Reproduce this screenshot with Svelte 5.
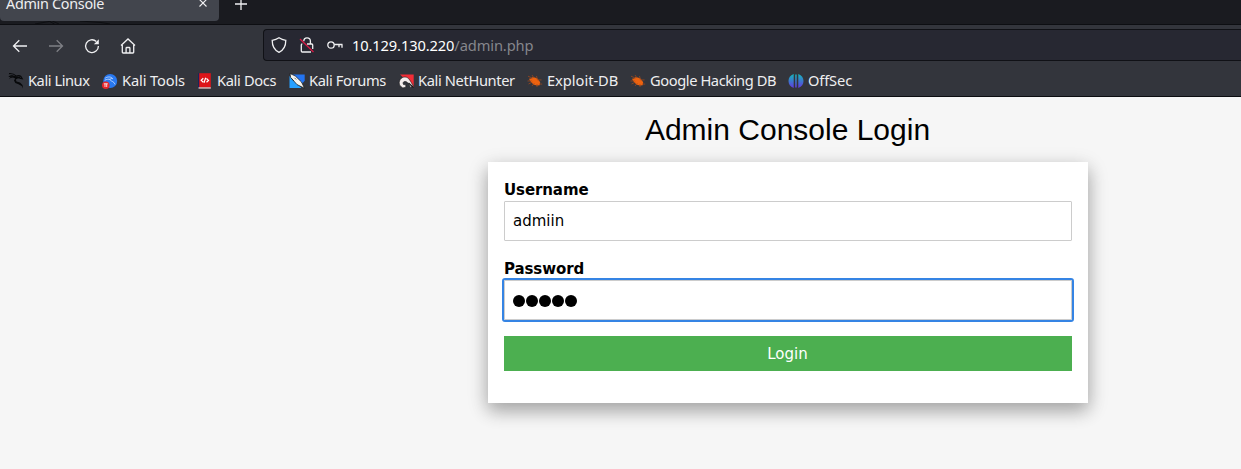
<script>
  const bookmarks = [
    { name: 'Kali Linux', icon: 'dragon', width: 94, tracking: -0.45 },
    { name: 'Kali Tools', icon: 'tools', width: 95, tracking: -0.14 },
    { name: 'Kali Docs', icon: 'docs', width: 92, tracking: -0.34 },
    { name: 'Kali Forums', icon: 'forums', width: 109, tracking: -0.36 },
    { name: 'Kali NetHunter', icon: 'hunter', width: 129, tracking: -0.37 },
    { name: 'Exploit-DB', icon: 'bug', width: 103, tracking: -0.03 },
    { name: 'Google Hacking DB', icon: 'bug', width: 158, tracking: -0.41 },
    { name: 'OffSec', icon: 'offsec', width: 80, tracking: -0.14 }
  ];
  let username = $state('admiin');
</script>

{#snippet dragon(color)}
  <path d="M0.2 1.5 5 2.5 8 3.2 11.3 5.5 9.5 5.5 7.8 6.5 8.5 8.5 12 9.5 14.5 12 15 15.5 13.7 13 10.5 11.2 7.3 10 6 7.4 7.2 5.4 5 4.5 2.5 5.1 0.8 6.2 2.5 4.1 5 3.5Z" fill={color}/>
  <path d="M1 .5C4 .3 6.5 1.2 8 2.8M.8 3.5l4-.4M8 3.2c2-.8 4-.5 5 .3l1.3 2.2-3-.6M9 4.4l2.6-.2.8 1.6" fill="none" stroke={color} stroke-width="1.1"/>
{/snippet}

{#snippet favicon(kind)}
  <svg class="favicon" viewBox="0 0 16 16">
    {#if kind === 'dragon'}
      {@render dragon('#08090b')}
    {:else if kind === 'tools'}
      <circle cx="8.2" cy="8" r="7" fill="#2878f0"/>
      <path d="M3.2 5.2c3-2 6.3-1.4 7.5.5-2-.7-2.9.3-2.3 1.5.6 1.2 3.2.7 4.6 4.2M2.7 7.3c2.1-1.1 3.8-1.3 5.4-.9" stroke="#b9d5ff" stroke-width="1" fill="none"/>
      <circle cx="3.8" cy="12.2" r="3.8" fill="#e5262b"/>
      <path d="M1.8 10.8h4M3 10.8V14m1.7-3.2V14" stroke="#fff" stroke-width=".8" fill="none"/>
    {:else if kind === 'docs'}
      <path d="M1 .2h2v15H1z" fill="#1b235c"/>
      <path d="M2.2.2h11.6v15H2.2z" fill="#dc1519"/>
      <path d="M1.5 14.2h12.3v1.5H1.5z" fill="#c9b9b9"/>
      <path d="M6.3 5.3 4.2 7.3l2.1 1.9m3.2-3.7 2 1.9-2 1.9M8.7 4.7 7 9.8" stroke="#fff" stroke-width="1.2" fill="none"/>
    {:else if kind === 'forums'}
      <path d="M2 1.5h13.7v6.2L12 12 1.5 3.5z" fill="#2374f1"/>
      <path d="M.5 3v12h12z" fill="#27a0ff"/>
      <path d="M1 .5 1.6 4.4 8 11.6l7.5 3.6-3-6.2-6.2-6z" fill="#f4f4f0" stroke="#111" stroke-width=".7"/>
      <path d="m5.5 4.8 1.7 1.7M2.4 5.3l2.5 2.8" stroke="#111" stroke-width=".6"/>
    {:else if kind === 'hunter'}
      <path d="M2 1.5h13.7v12.8z" fill="#f22d37"/>
      <path d="M2 12.7C-.3 8.5 3 3.8 7 4c4.2.2 5.4 4.6 8.2 8.7l-2.7 1.7C10.7 11 9.5 8.3 6.8 8.5c-1.7.1-2.1 1.7-1.3 3l2.3.3v2.5l-3 .6z" fill="#f4eded" stroke="#171719" stroke-width=".6"/>
      <path d="m10.5 10 5 4.5" stroke="#171719" stroke-width="1.2"/>
    {:else if kind === 'bug'}
      <path d="m2 5.7 2.3-.2 1-1.3 2.6.2 2.7 1.3 2.6 3.6-.5 3-2.9.3-3.4-1.2L3.2 8z" fill="#ed620f"/>
      <path d="m1 3.2 4.5 2M5 2l2 3M9.5 3l1 4 4-.1M.5 8l4.2-.2M1.5 11l4-2M5 13l2.5-3M10 14v-3M12 11l3.2.1" stroke="#a94b1a" stroke-width=".7" fill="none"/>
    {:else}
      <defs><linearGradient id="offsec" gradientUnits="userSpaceOnUse" x1="0" y1="1" x2="0" y2="15"><stop stop-color="#14b8bc"/><stop offset="1" stop-color="#6338e0"/></linearGradient></defs>
      <path d="M7.2 1.5h1.5v13H7.2zM5.7 1v14C2.2 13.8.5 11.3.5 8s1.7-5.8 5.2-7zM10.3 1v14c3.5-1.2 5.2-3.7 5.2-7s-1.7-5.8-5.2-7z" fill="url(#offsec)"/>
    {/if}
  </svg>
{/snippet}

<div class="window">
  <header class="browser">
    <div class="tabs">
      <div class="tab">
        <span>Admin Console</span>
        <svg class="close" viewBox="0 0 8 8"><path d="m.5.5 7 7m0-7-7 7"/></svg>
      </div>
      <svg class="plus" viewBox="0 0 14 14"><path d="M7 1v12M1 7h12"/></svg>
      <svg class="emblem" viewBox="0 0 120 4"><path d="M0 4 22 0M18 0l8 4M23 0l9 4M60 0l28 2 12 2"/></svg>
    </div>
    <nav class="toolbar">
      <div class="controls">
        <svg viewBox="0 0 16 16"><path d="M15 8H1.8M7.3 2.3 1.5 8l5.8 5.7"/></svg>
        <svg class="dim" viewBox="0 0 16 16"><path d="M1 8h13.2M8.7 2.3 14.5 8l-5.8 5.7"/></svg>
        <svg viewBox="0 0 16 16"><path d="M12.3 3.4A6.4 6.4 0 1 0 14.4 8"/><path class="tip" d="M14.8 1.2v5H9.9z"/></svg>
        <svg viewBox="0 0 16 16"><path d="M1 7.5 8 1l7 6.5M2.3 7v7.2q0 .8.8.8h9.8q.8 0 .8-.8V7M6.1 14.8v-4.5q0-.8.8-.8h2.2q.8 0 .8.8v4.5"/></svg>
      </div>
      <div class="address">
        <svg viewBox="0 0 16 16"><path d="M8 .8c2.2 1.5 4.3 2.2 6.8 2.5 0 5.3-1.1 9.5-6.8 12C2.3 12.8 1.2 8.6 1.2 3.3 3.7 3 5.8 2.3 8 .8z"/></svg>
        <svg viewBox="0 0 16 16"><path d="M4.8 4.3C4.8 2 6 .8 8 .8s3.4 1.2 3.4 3.5V7M8 7h4.7q1 0 1 1v4M12 15H3.3q-1 0-1-1V8q0-1 1-1"/><path class="slash" d="m1 2 13.5 13"/></svg>
        <svg viewBox="0 0 16 16"><circle cx="4" cy="8" r="3.2"/><path d="M7.2 7.5h8.3M12 7.5v2.7m3-2.7v3.2"/></svg>
        <span class="url">10.129.130.220<em>/admin.php</em></span>
      </div>
    </nav>
    <div class="bookmarks">
      {#each bookmarks as item}
        <div class="bookmark" style:width="{item.width}px">
          {@render favicon(item.icon)}<span style:letter-spacing="{item.tracking}px">{item.name}</span>
        </div>
      {/each}
    </div>
  </header>
  <main>
    <h2>Admin Console Login</h2>
    <form onsubmit={(event) => event.preventDefault()}>
      <label for="user">Username</label>
      <input id="user" bind:value={username} spellcheck="false">
      <label for="pass">Password</label>
      <div id="pass" class="secret" tabindex="0" role="textbox"><i></i><i></i><i></i><i></i><i></i></div>
      <button>Login</button>
    </form>
  </main>
</div>

<style>
  :global(body) { margin: 0; overflow: hidden; }
  .window { width: 1241px; height: 469px; overflow: hidden; background: #f6f6f6; }
  .browser { height: 97px; box-sizing: border-box; border-bottom: 1px solid #0c0d11; background: #33353c; color: #eeeef0; font-family: "Noto Sans", sans-serif; }
  .tabs { height: 25px; box-sizing: border-box; background: #1a1b20; border-bottom: 1px solid #0d0e12; display: flex; position: relative; }
  .tab { width: 219px; height: 21px; box-sizing: border-box; border-radius: 0 0 4px 4px; background: #42454d; display: flex; justify-content: space-between; padding: 0 12px 0 6px; }
  .tab span { font-size: 14.4px; line-height: 20px; margin-top: -6px; letter-spacing: -.3px; }
  svg { display: block; flex: none; fill: none; stroke: #f0f0f2; stroke-width: 1.3; overflow: visible; }
  .favicon { stroke: none; }
  .close { width: 8px; height: 8px; margin-top: -1px; stroke-width: 1.1; }
  .plus { width: 14px; height: 14px; margin: -3px 0 0 15px; }
  .emblem { position: absolute; left: 20px; bottom: 0; width: 120px; height: 3px; stroke: #0d0e11; overflow: hidden; }
  .toolbar { height: 40px; display: flex; align-items: center; }
  .controls { width: 263px; box-sizing: border-box; padding: 1px 0 0 12px; display: flex; gap: 20px; }
  .controls svg { width: 16px; height: 16px; }
  .dim { opacity: .4; }
  .tip { fill: #f0f0f2; stroke: none; }
  .address { flex: 1; height: 32px; box-sizing: border-box; border: 1px solid #101116; border-right: 0; border-radius: 4px 0 0 4px; background: #272832; display: flex; align-items: center; padding-left: 7px; gap: 12px; }
  .address svg { width: 16px; height: 16px; }
  .address svg .slash { stroke: #d71945; }
  .url { font-size: 14.67px; line-height: 20px; margin-left: -3px; color: #fff; white-space: pre; letter-spacing: -.12px; }
  em { font-style: normal; color: #85868c; }
  .bookmarks { height: 31px; display: flex; align-items: center; padding-left: 8px; }
  .bookmark { height: 20px; display: flex; align-items: center; gap: 4px; flex: none; font-size: 14.67px; line-height: 20px; white-space: nowrap; }
  .bookmark span { padding-bottom: 2px; }
  .favicon { width: 16px; height: 16px; }
  main { width: 600px; margin-left: 488px; padding-top: 10px; }
  h2 { margin: 0 0 10px; padding-right: 1px; text-align: center; font: 400 30px/45px "Liberation Sans", sans-serif; color: #000; }
  form { height: 241px; box-sizing: border-box; padding: 16px; background: #fff; box-shadow: 0 8px 16px 0 rgba(0,0,0,.2), 0 6px 20px 0 rgba(0,0,0,.19); font: 15px/23px "DejaVu Sans", sans-serif; color: #000; }
  label { display: block; height: 23px; line-height: 25px; font-weight: 700; letter-spacing: -.1px; }
  input, .secret { width: 568px; height: 40px; box-sizing: border-box; border: 1px solid #ccc; border-radius: 1px; background: #fff; padding: 8px; font: inherit; display: block; color: #000; margin-bottom: 16px; outline: 0; }
  .secret { display: flex; align-items: center; gap: 1px; outline: 2px solid #3584e4; padding-top: 9px; }
  i { width: 12px; height: 12px; border-radius: 50%; background: #000; }
  button { width: 568px; height: 35px; border: 0; padding: 2px 1px 0 0; background: #4caf50; color: #fff; font: inherit; display: block; }
</style>
